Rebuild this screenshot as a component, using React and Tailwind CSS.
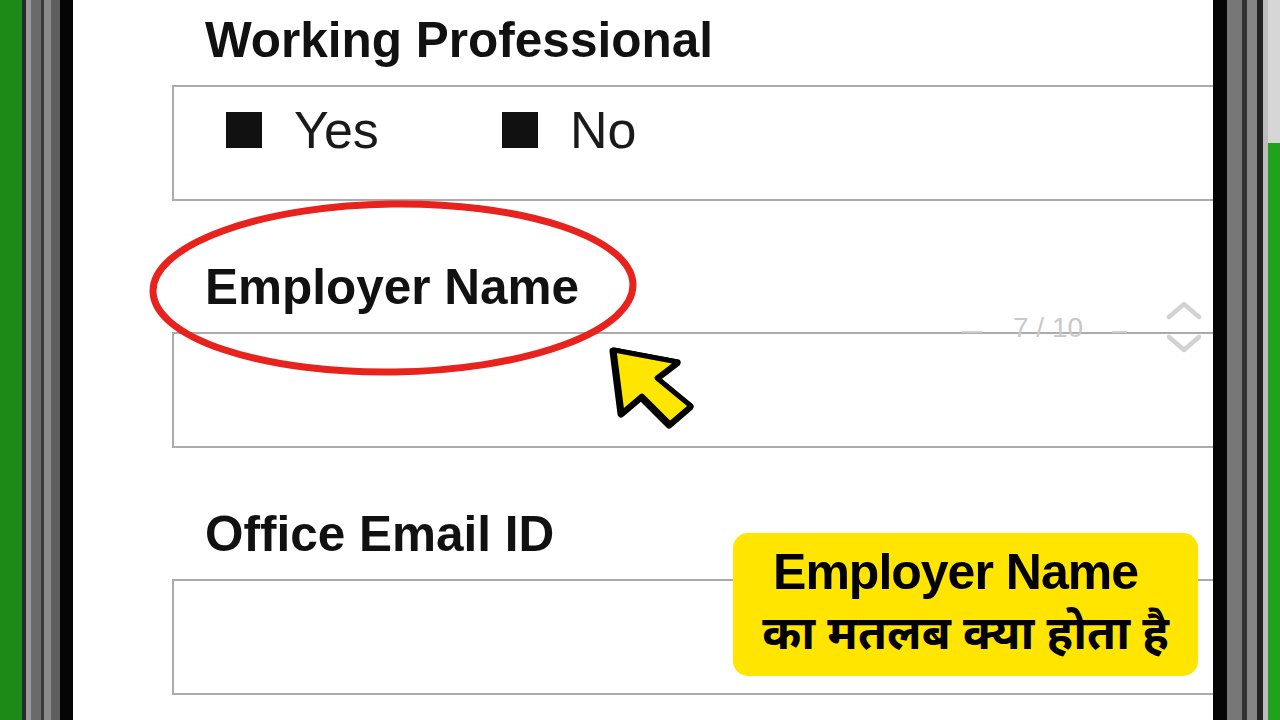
const fields = [
  { label: 'Working Professional', options: ['Yes', 'No'] },
  { label: 'Employer Name' },
  { label: 'Office Email ID' }
];

const leftBezel = [
  { w: 'w-[4px]', bg: 'bg-[#2a2a2a]' },
  { w: 'w-[5px]', bg: 'bg-[#9a9a9a]' },
  { w: 'w-[10px]', bg: 'bg-[#6a6a6a]' },
  { w: 'w-[3px]', bg: 'bg-[#3a3a3a]' },
  { w: 'w-[7px]', bg: 'bg-[#8a8a8a]' },
  { w: 'w-[9px]', bg: 'bg-[#5e5e5e]' },
  { w: 'w-[13px]', bg: 'bg-[#050505]' }
];

const rightBezel = [
  { w: 'w-[14px]', bg: 'bg-[#050505]' },
  { w: 'w-[15px]', bg: 'bg-[#777777]' },
  { w: 'w-[5px]', bg: 'bg-[#333333]' },
  { w: 'w-[10px]', bg: 'bg-[#858585]' },
  { w: 'w-[6px]', bg: 'bg-[#222222]' },
  { w: 'w-[5px]', bg: 'bg-[#bdbdbd]' }
];

const Field = ({ label, options }) => (
  <div className="flex flex-col">
    <div className="h-[56px] pl-[33px] text-[49.5px] font-bold leading-[56px] text-[#111]">{label}</div>
    <div className="mt-[17px] h-[116px] border-2 border-r-0 border-[#ababab]">
      {options && (
        <div className="flex h-[60px] items-center pl-[52px] pt-[26px]">
          {options.map((opt, i) => (
            <div key={opt} className={i === 0 ? 'flex w-[276px] items-center' : 'flex items-center'}>
              <span className="h-[36px] w-[36px] bg-[#111]" />
              <span className="ml-[32px] text-[52px] leading-[60px] text-[#1a1a1a]">{opt}</span>
            </div>
          ))}
        </div>
      )}
    </div>
  </div>
);

export default function App() {
  return (
    <div className="relative flex h-[720px] w-[1280px] overflow-hidden bg-white font-['Liberation_Sans',Arial,sans-serif]">
      <div className="w-[22px] bg-[#1d8a17]" />
      {leftBezel.map((s, i) => (
        <div key={i} className={`${s.w} ${s.bg}`} />
      ))}

      <main className="flex flex-1 flex-col gap-[58px] bg-white pl-[99px] pt-[12px]">
        {fields.map((f) => (
          <Field key={f.label} {...f} />
        ))}
      </main>

      {rightBezel.map((s, i) => (
        <div key={i} className={`${s.w} ${s.bg}`} />
      ))}
      <div className="flex w-[12px] flex-col">
        <div className="h-[143px] bg-[#d6d6d6]" />
        <div className="flex-1 bg-[#22a11c]" />
      </div>

      {/* scroll indicator */}
      <div className="absolute left-[1013px] top-[312px] text-[28px] font-light leading-[32px] text-[#c9c9c9]">
        7 / 10
      </div>
      <div className="absolute left-[962px] top-[331px] h-[2px] w-[20px] bg-[#cfcfcf]" />
      <div className="absolute left-[1112px] top-[331px] h-[2px] w-[15px] bg-[#cfcfcf]" />
      <svg className="absolute left-[1166px] top-[300px]" width="36" height="56" viewBox="0 0 36 56">
        <path d="M3 17 L18 4 L33 17" fill="none" stroke="#d2d2d2" strokeWidth="4.5" strokeLinecap="round" strokeLinejoin="round" />
        <path d="M3 37 L18 50 L33 37" fill="none" stroke="#d2d2d2" strokeWidth="4.5" strokeLinecap="round" strokeLinejoin="round" />
      </svg>

      {/* red circle + pointer */}
      <svg className="absolute left-0 top-0" width="1280" height="720" viewBox="0 0 1280 720">
        <ellipse cx="393" cy="288" rx="240" ry="84" fill="none" stroke="#e8221c" strokeWidth="7" transform="rotate(-0.8 393 288)" />
        <polygon
          points="614,350 678,362 657,378 691,406 670,424 642,396 622,413"
          fill="#000"
          stroke="#000"
          strokeWidth="7"
          strokeLinejoin="round"
          transform="translate(-1 1)"
        />
        <polygon
          points="614,350 678,362 657,378 691,406 670,424 642,396 622,413"
          fill="#ffe600"
          stroke="#000"
          strokeWidth="5"
          strokeLinejoin="round"
        />
      </svg>

      {/* caption */}
      <div className="absolute left-[733px] top-[533px] flex h-[143px] w-[465px] flex-col items-center rounded-[15px] bg-[#ffe500] pt-[10px] text-black">
        <div className="pr-[20px] text-[50px] font-bold leading-[58px] tracking-[-1px]">Employer Name</div>
        <div className="mt-[6px] font-['Noto_Sans_Devanagari','Lohit_Devanagari','Noto_Sans',sans-serif] text-[47px] font-bold leading-[62px]">
          का मतलब क्या होता है
        </div>
      </div>
    </div>
  );
}
